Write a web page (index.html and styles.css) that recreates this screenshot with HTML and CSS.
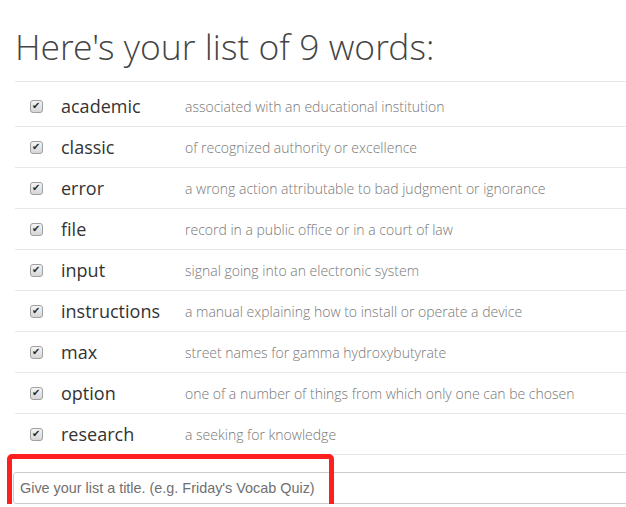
FILE: index.html
```html
<!DOCTYPE html>
<html lang="en">
<head>
    <meta charset="UTF-8">
    <title>Word list</title>
    <link rel="stylesheet" href="styles.css">
</head>
<body>
    <h1>Here's your list of 9 words:</h1>

    <table class="words">
        <tr><td class="check"><input type="checkbox" checked></td><td class="word">academic</td><td class="def">associated with an educational institution</td></tr>
        <tr><td class="check"><input type="checkbox" checked></td><td class="word">classic</td><td class="def">of recognized authority or excellence</td></tr>
        <tr><td class="check"><input type="checkbox" checked></td><td class="word">error</td><td class="def">a wrong action attributable to bad judgment or ignorance</td></tr>
        <tr><td class="check"><input type="checkbox" checked></td><td class="word">file</td><td class="def">record in a public office or in a court of law</td></tr>
        <tr><td class="check"><input type="checkbox" checked></td><td class="word">input</td><td class="def">signal going into an electronic system</td></tr>
        <tr><td class="check"><input type="checkbox" checked></td><td class="word">instructions</td><td class="def">a manual explaining how to install or operate a device</td></tr>
        <tr><td class="check"><input type="checkbox" checked></td><td class="word">max</td><td class="def">street names for gamma hydroxybutyrate</td></tr>
        <tr><td class="check"><input type="checkbox" checked></td><td class="word">option</td><td class="def">one of a number of things from which only one can be chosen</td></tr>
        <tr><td class="check"><input type="checkbox" checked></td><td class="word">research</td><td class="def">a seeking for knowledge</td></tr>
    </table>

    <div class="title-row">
        <input type="text" class="title-input" placeholder="Give your list a title. (e.g. Friday's Vocab Quiz)">
        <div class="highlight"></div>
    </div>
</body>
</html>
```

FILE: styles.css
```css
body {
    margin: 0;
    padding: 0 0 0 15px;
    font-family: "Open Sans", sans-serif;
    color: #333;
    background: #fff;
    overflow: hidden;
}

h1 {
    margin: 22px 0 0 0;
    font-family: "Open Sans Light", "Open Sans", sans-serif;
    font-size: 35.5px;
    font-weight: 300;
    line-height: 48px;
    color: #444;
    height: 59px;
}

.words {
    width: 640px;
    border-collapse: collapse;
}

.words td {
    border-top: 1px solid #e8e8e8;
    padding: 8px 0;
    height: 24px;
    vertical-align: middle;
}

.words tr:first-child td {
    padding-top: 12px;
}

.check {
    width: 31px;
    padding-left: 15px !important;
}

.check input {
    appearance: none;
    -webkit-appearance: none;
    position: relative;
    margin: 0;
    width: 13px;
    height: 13px;
    display: block;
    border: 1px solid #a0a0a0;
    border-radius: 3px;
    background: linear-gradient(#f4f4f4, #d6d6d6);
    box-sizing: border-box;
}

.check input:checked::after {
    content: "\2714";
    position: absolute;
    left: 1px;
    top: -3px;
    font-family: "DejaVu Sans", sans-serif;
    font-size: 10px;
    line-height: 16px;
    color: #2a2a2a;
}

.word {
    width: 124px;
    font-size: 18px;
    color: #333;
}

.def {
    font-size: 14px;
    font-weight: 300;
    color: #777;
}

.title-row {
    position: relative;
    border-top: 1px solid #e8e8e8;
    padding: 17px 0 0 0;
    margin-left: -2px;
}

.title-input {
    display: block;
    width: 640px;
    height: 32px;
    box-sizing: border-box;
    border: 1px solid #ccc;
    border-radius: 3px;
    padding: 4px 6px;
    font-family: "Liberation Sans", Arial, sans-serif;
    font-size: 14.4px;
    color: #555;
}

.title-input::placeholder {
    color: #707070;
}

.highlight {
    position: absolute;
    left: -6px;
    top: -1px;
    width: 317px;
    height: 50px;
    border: 5px solid #ff1f1f;
    border-radius: 5px;
}
```
